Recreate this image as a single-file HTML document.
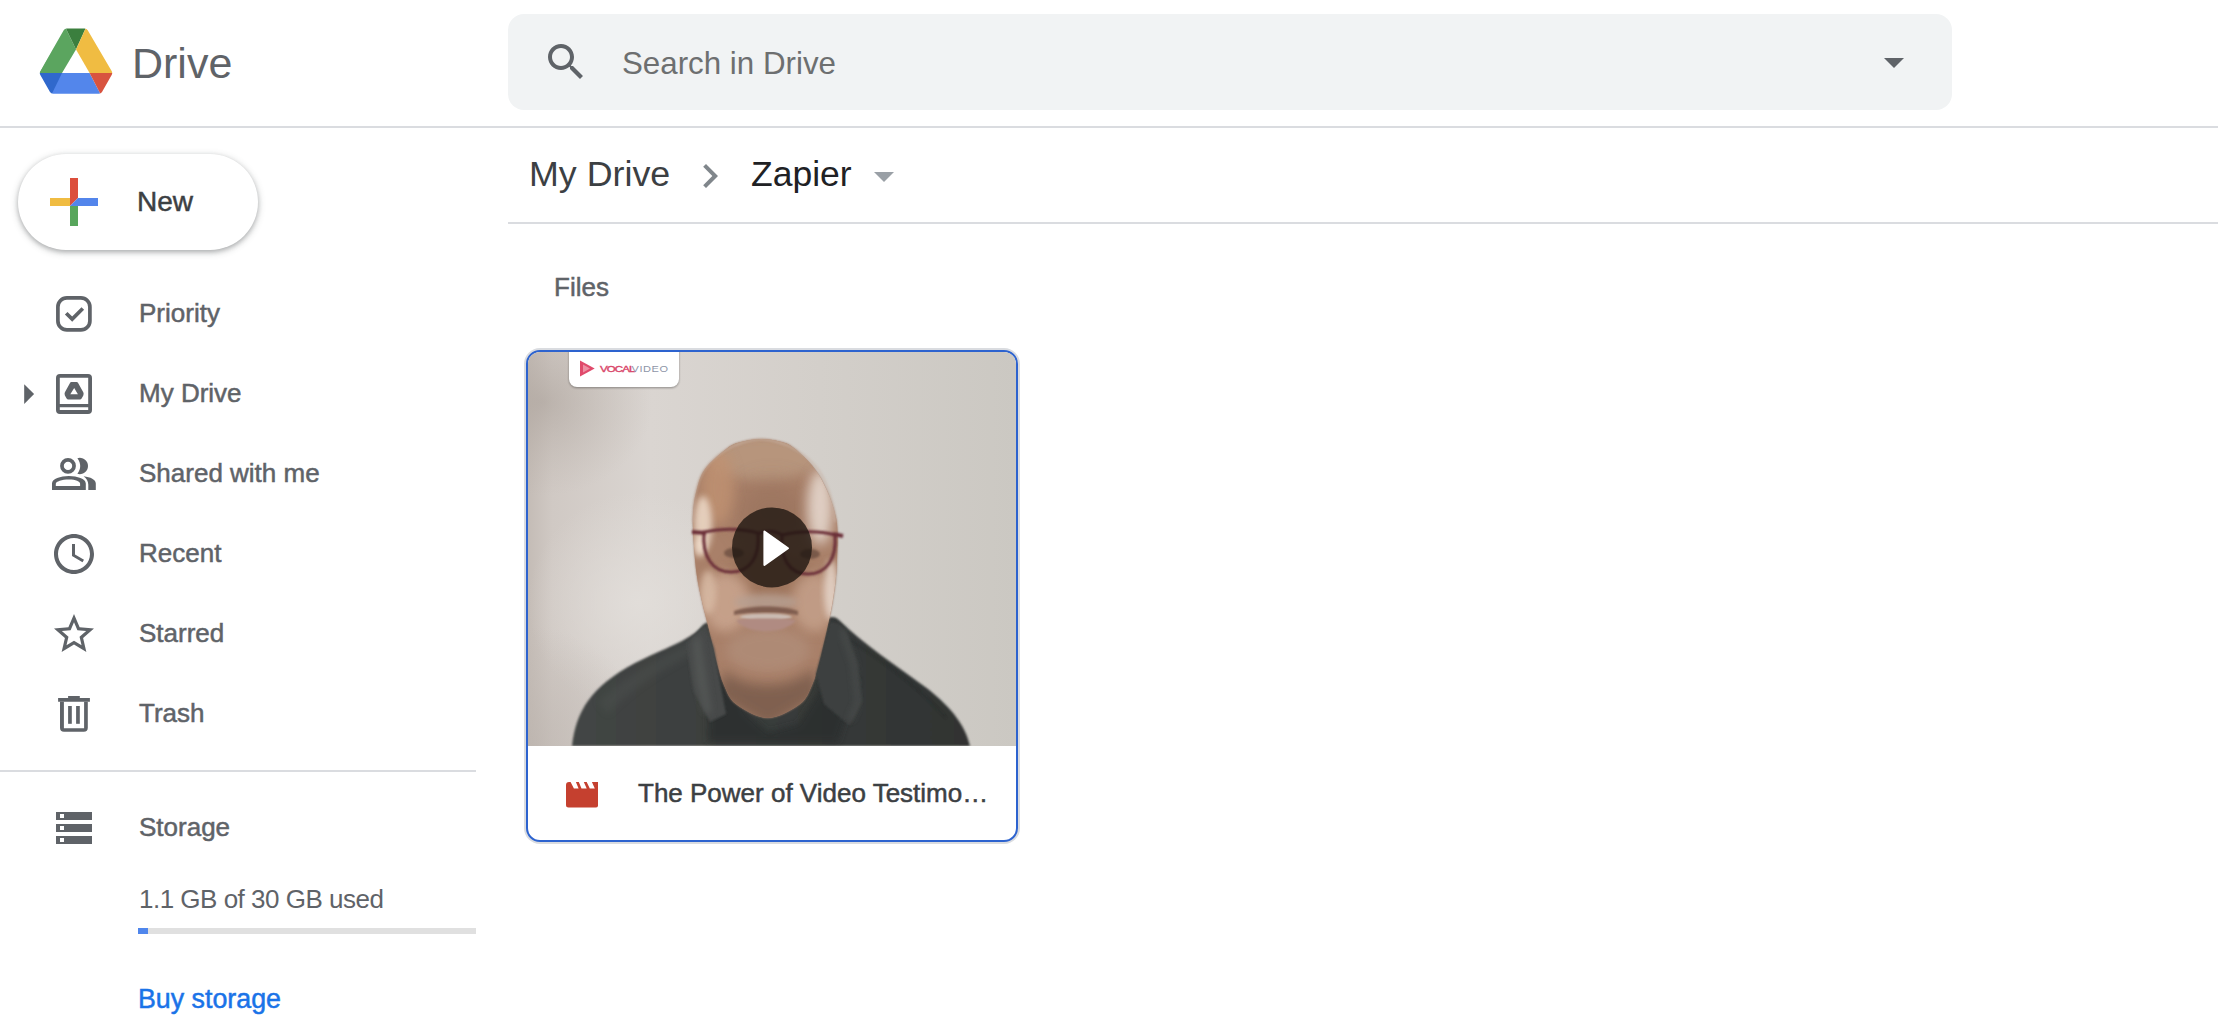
<!DOCTYPE html>
<html><head><meta charset="utf-8">
<style>
html,body{margin:0;padding:0;background:#fff;}
body{width:2218px;height:1034px;position:relative;overflow:hidden;font-family:"Liberation Sans",sans-serif;}
.a{position:absolute;white-space:nowrap;}
.med{-webkit-text-stroke:0.5px currentColor;}
.hline{position:absolute;height:2px;background:#dadce0;}
.nav{position:absolute;left:139px;font-size:26px;color:#5f6368;line-height:30px;}
</style></head>
<body>
<!-- Header -->
<svg class="a" style="left:37px;top:26px" width="78" height="70" viewBox="37 26 78 70">
  <defs><mask id="lgm" maskUnits="userSpaceOnUse" x="30" y="20" width="90" height="80"><path d="M66.73 32 L84.7 32 L108.76 73.03 L98.96 90.3 L53.04 90.3 L43.23 73.01 Z" fill="#fff" stroke="#fff" stroke-width="7" stroke-linejoin="round"/></mask></defs>
  <g mask="url(#lgm)">
  <path d="M64.7 26 L39 73 L62 73 L76 49.5 Z" fill="#5ba55f"/>
  <path d="M64.7 26 L86.7 26 L76 49.5 Z" fill="#3b7f3e"/>
  <path d="M86.7 26 L114 73 L89.6 73 L76 49.5 Z" fill="#f0bc42"/>
  <path d="M39 73 L62 73 L89.6 73 L101 95 L51.3 95 Z" fill="#5386eb"/>
  <path d="M38 73 L62 73 L51.3 95 L38 95 Z" fill="#3068cc"/>
  <path d="M89.6 73 L114 73 L114 95 L101 95 Z" fill="#d8533f"/>
  </g>
</svg>
<div class="a" style="left:132px;top:38px;font-size:43px;line-height:50px;color:#5f6368">Drive</div>

<div class="a" style="left:508px;top:14px;width:1444px;height:96px;border-radius:16px;background:#f1f3f4"></div>
<svg class="a" style="left:542px;top:38px" width="48" height="48" viewBox="0 0 24 24"><path fill="#5f6368" d="M15.5 14h-.79l-.28-.27C15.41 12.59 16 11.11 16 9.5 16 5.91 13.09 3 9.5 3S3 5.91 3 9.5 5.91 16 9.5 16c1.61 0 3.09-.59 4.23-1.57l.27.28v.79l5 4.99L20.49 19l-4.99-5zm-6 0C7.01 14 5 11.99 5 9.5S7.01 5 9.5 5 14 7.01 14 9.5 11.99 14 9.5 14z"/></svg>
<div class="a" style="left:622px;top:46px;font-size:31.3px;line-height:36px;color:#6d6f70">Search in Drive</div>
<svg class="a" style="left:1884px;top:58px" width="20" height="10" viewBox="0 0 20 10"><path d="M0 0 L20 0 L10 10 Z" fill="#5f6368"/></svg>

<div class="hline" style="left:0;top:126px;width:2218px"></div>

<!-- Sidebar -->
<div class="a" style="left:18px;top:154px;width:240px;height:96px;border-radius:48px;background:#fff;box-shadow:0 2px 4px rgba(60,64,67,.3),0 2px 6px 2px rgba(60,64,67,.15)"></div>
<svg class="a" style="left:50px;top:178px" width="48" height="48" viewBox="0 0 48 48">
  <rect x="0" y="20" width="20" height="8" fill="#f0bc42"/>
  <rect x="20" y="28" width="8" height="20" fill="#58a65c"/>
  <path d="M20 0 H28 V20 L20 28 Z" fill="#dc4e3c"/>
  <path d="M28 20 H48 V28 H20 Z" fill="#5385eb"/>
</svg>
<div class="a med" style="left:137px;top:186px;font-size:28px;line-height:32px;color:#3c4043">New</div>


<svg class="a" style="left:0;top:280px" width="120" height="580" viewBox="0 280 120 580">
 <g fill="#5f6368">
  <!-- priority -->
  <rect x="57.9" y="297.9" width="32" height="32" rx="9" fill="none" stroke="#5f6368" stroke-width="3.7"/>
  <path d="M66.2 313.2 L72.2 319.1 L82.8 308.5" fill="none" stroke="#5f6368" stroke-width="3.7"/>
  <!-- my drive arrow -->
  <path d="M24.2 384.2 L34.1 394 L24.2 403.9 Z"/>
  <!-- my drive icon -->
  <path fill-rule="evenodd" d="M60 374 H88 Q92 374 92 378 V410 Q92 414 88 414 H60 Q56 414 56 410 V378 Q56 374 60 374 Z M59.8 377.8 V404.1 H88.2 V377.8 Z M59.8 407.2 V410.1 H88.2 V407.2 Z"/>
  <path fill-rule="evenodd" d="M71.3 382 H76.6 Q77.6 382 78.1 382.9 L83.3 392.3 Q84 393.9 83.3 395.4 L81.6 398.6 Q81 399.6 80 399.6 H68.2 Q67.2 399.6 66.6 398.6 L64.9 395.4 Q64.2 393.9 64.9 392.3 L70 382.9 Q70.4 382 71.3 382 Z M74.2 387.9 L70.3 394.2 H77.9 Z"/>
  <!-- shared -->
  <circle cx="68" cy="465.9" r="6.05" fill="none" stroke="#5f6368" stroke-width="3.7"/>
  <path d="M77.4 458.2 A8.17 8.17 0 1 1 77.4 473.8 C79.4 471 80.2 468.5 80.2 466 C80.2 463.5 79.4 461 77.4 458.2 Z"/>
  <path fill-rule="evenodd" d="M52 490 V483.5 C52 478.8 60.5 476 68.9 476 C77.3 476 85.8 478.8 85.8 483.5 V490 Z M55.8 486 V483.8 C55.8 481.6 62 479.6 68.9 479.6 C75.8 479.6 80.1 481.6 80.1 483.8 V486 Z"/>
  <path d="M83.6 476.2 C90.5 477 95.8 479.5 95.8 483.5 V490 H88.3 V484.8 C88.3 481.2 86.5 478.2 83.6 476.2 Z"/>
  <!-- recent -->
  <g transform="translate(50 530) scale(2)"><path d="M11.99 2C6.47 2 2 6.48 2 12s4.47 10 9.99 10C17.52 22 22 17.52 22 12S17.52 2 11.99 2zM12 20c-4.42 0-8-3.58-8-8s3.58-8 8-8 8 3.58 8 8-3.58 8-8 8zm.5-13H11v6l5.25 3.15.75-1.23-4.5-2.67z"/></g>
  <!-- starred -->
  <g transform="translate(50 610) scale(2)"><path d="M22 9.24l-7.19-.62L12 2 9.19 8.63 2 9.24l5.46 4.73L5.82 21 12 17.27 18.18 21l-1.63-7.03L22 9.24zM12 15.4l-3.76 2.27 1-4.28-3.32-2.88 4.38-.38L12 6.1l1.71 4.04 4.38.38-3.32 2.88 1 4.28L12 15.4z"/></g>
  <!-- trash -->
  <path d="M68.1 696 H79.8 V698.1 H89.9 V701.8 H58.1 V698.1 H68.1 Z"/>
  <path fill-rule="evenodd" d="M60 701.8 H87.8 V727.8 Q87.8 731.8 83.8 731.8 H64 Q60 731.8 60 727.8 Z M63.9 701.8 V728.3 H84.1 V701.8 Z"/>
  <rect x="68.1" y="706" width="3.7" height="17.8"/>
  <rect x="76.1" y="706" width="3.7" height="17.8"/>
  <!-- storage -->
  <path fill-rule="evenodd" d="M56 812 H92 V820 H56 Z M60 814 V818 H64 V814 Z"/>
  <path fill-rule="evenodd" d="M56 824 H92 V832 H56 Z M60 826 V830 H64 V826 Z"/>
  <path fill-rule="evenodd" d="M56 836 H92 V844 H56 Z M60 838 V842 H64 V838 Z"/>
 </g>
</svg>
<div class="nav med" style="top:298px">Priority</div>
<div class="nav med" style="top:378px">My Drive</div>
<div class="nav med" style="top:458px">Shared with me</div>
<div class="nav med" style="top:538px">Recent</div>
<div class="nav med" style="top:618px">Starred</div>
<div class="nav med" style="top:698px">Trash</div>

<div class="hline" style="left:0;top:770px;width:476px"></div>
<div class="nav med" style="top:812px">Storage</div>
<div class="nav" style="top:884px;letter-spacing:-0.5px">1.1 GB of 30 GB used</div>
<div class="a" style="left:138px;top:928px;width:338px;height:6px;background:#e0e0e0"></div>
<div class="a" style="left:138px;top:928px;width:10px;height:6px;background:#4f86ec"></div>
<div class="nav med" style="top:984px;left:138px;font-size:26.8px;color:#1a73e8">Buy storage</div>

<!-- Main -->
<div class="a" style="left:529px;top:154px;font-size:35.8px;line-height:40px;color:#3c4043">My Drive</div>
<svg class="a" style="left:686px;top:152px" width="48" height="48" viewBox="0 0 24 24"><path fill="#80868b" d="M10 6L8.59 7.41 13.17 12l-4.58 4.59L10 18l6-6z"/></svg>
<div class="a" style="left:751px;top:154px;font-size:35.5px;line-height:40px;color:#202124">Zapier</div>
<svg class="a" style="left:874px;top:172px" width="20" height="10" viewBox="0 0 20 10"><path d="M0 0 L20 0 L10 10 Z" fill="#9aa0a6"/></svg>
<div class="hline" style="left:508px;top:222px;width:1710px"></div>

<div class="a med" style="left:554px;top:272px;font-size:26px;line-height:30px;color:#5f6368">Files</div>

<!-- Card -->
<div class="a" style="left:526px;top:350px;width:488px;height:488px;border:2px solid #2d63cf;border-radius:14px;box-shadow:0 0 0 2px #dadce0;overflow:hidden;background:#fff">
  <svg class="a" style="left:0;top:0" width="488" height="394" viewBox="0 0 488 394">
 <defs>
  <filter id="b1" x="-20%" y="-20%" width="140%" height="140%"><feGaussianBlur stdDeviation="1.2"/></filter>
  <filter id="b2" x="-30%" y="-30%" width="160%" height="160%"><feGaussianBlur stdDeviation="3"/></filter>
  <filter id="b3" x="-50%" y="-50%" width="200%" height="200%"><feGaussianBlur stdDeviation="6"/></filter>
  <filter id="b5" x="-80%" y="-80%" width="260%" height="260%"><feGaussianBlur stdDeviation="12"/></filter>
  <linearGradient id="bgL" x1="0" y1="0" x2="1" y2="0">
   <stop offset="0" stop-color="#c4bcb6"/><stop offset="0.05" stop-color="#d0c9c4"/><stop offset="0.25" stop-color="#dad5d1"/><stop offset="0.6" stop-color="#d3cfca"/><stop offset="1" stop-color="#cbc8c2"/>
  </linearGradient>
  <radialGradient id="tl" gradientUnits="userSpaceOnUse" cx="15" cy="50" r="110" gradientTransform="translate(15 50) scale(1 0.85) translate(-15 -50)">
   <stop offset="0" stop-color="#a0968e" stop-opacity="0.45"/><stop offset="0.55" stop-color="#a99f97" stop-opacity="0.2"/><stop offset="1" stop-color="#b0a69e" stop-opacity="0"/>
  </radialGradient>
  <radialGradient id="lt" gradientUnits="userSpaceOnUse" cx="110" cy="250" r="110">
   <stop offset="0" stop-color="#e2deda" stop-opacity="0.9"/><stop offset="1" stop-color="#e2deda" stop-opacity="0"/>
  </radialGradient>
  <radialGradient id="bl" gradientUnits="userSpaceOnUse" cx="0" cy="394" r="120">
   <stop offset="0" stop-color="#b9b1ab" stop-opacity="0.6"/><stop offset="1" stop-color="#b9b1ab" stop-opacity="0"/>
  </radialGradient>
  <radialGradient id="skull" cx="0.5" cy="0.2" r="0.75">
   <stop offset="0" stop-color="#b08a74"/><stop offset="0.45" stop-color="#a27b66"/><stop offset="1" stop-color="#86665a"/>
  </radialGradient>
  <linearGradient id="shirtG" x1="0" y1="0" x2="1" y2="0">
   <stop offset="0" stop-color="#434645"/><stop offset="0.5" stop-color="#393c3b"/><stop offset="1" stop-color="#303332"/>
  </linearGradient>
  <clipPath id="hc"><path d="M233.0 87.0 C239.1 87.0 246.1 88.1 251.6 89.6 C257.1 91.1 260.1 91.6 265.8 96.0 C271.6 100.4 280.7 109.2 286.1 116.0 C291.5 122.8 294.9 129.8 298.3 137.0 C301.7 144.2 304.5 152.2 306.4 159.3 C308.3 166.4 309.2 169.4 309.5 179.6 C309.8 189.8 309.2 208.3 308.4 220.2 C307.5 232.0 305.8 242.2 304.4 250.7 C303.0 259.2 301.7 264.4 300.3 271.0 C298.9 277.6 297.6 283.3 296.0 290.0 C294.4 296.7 293.0 303.8 291.0 311.0 C289.0 318.2 287.2 326.2 284.0 333.0 C280.8 339.8 279.3 346.5 272.0 352.0 C264.7 357.5 250.7 366.0 240.0 366.0 C229.3 366.0 215.3 357.5 208.0 352.0 C200.7 346.5 199.2 339.8 196.0 333.0 C192.8 326.2 191.0 318.2 189.0 311.0 C187.0 303.8 185.6 296.7 184.0 290.0 C182.4 283.3 181.0 277.6 179.4 271.0 C177.8 264.4 176.2 259.2 174.3 250.7 C172.5 242.2 169.8 232.0 168.3 220.2 C166.8 208.3 165.7 189.8 165.2 179.6 C164.7 169.4 164.7 166.1 165.2 159.3 C165.7 152.5 166.3 146.1 168.3 139.0 C170.3 131.9 171.8 124.2 177.0 117.0 C182.2 109.8 193.4 100.6 199.7 96.0 C206.0 91.4 209.4 91.1 215.0 89.6 C220.6 88.1 226.9 87.0 233.0 87.0 Z"/></clipPath>
 </defs>
 <rect width="488" height="394" fill="url(#bgL)"/>
 <rect width="488" height="394" fill="url(#tl)"/>
 <rect width="488" height="394" fill="url(#lt)"/>
 <rect width="488" height="394" fill="url(#bl)"/>
 <!-- shirt -->
 <path d="M44 394 C48 360 62 335 107 311 C135 297 162 288 172 276 C175 272 178 270 182 270 L244 290 L300 266 C304 264 308 265 311 268 C335 292 370 315 400 337 C425 357 438 375 442 394 Z" fill="url(#shirtG)" filter="url(#b1)"/>
 <path d="M70 350 C95 325 130 305 168 288 L172 298 C140 315 105 335 80 362 Z" fill="#4c4f4e" opacity="0.5" filter="url(#b2)"/>
 <path d="M322 288 C360 312 392 336 418 366" stroke="#282b2a" stroke-width="1.5" fill="none" opacity="0.6" filter="url(#b1)"/>
 <!-- collar shadows -->
 <path d="M178 280 L200 300 L218 360 L240 380 L270 372 L290 340 L300 290 L306 272 L330 330 L310 390 L180 390 Z" fill="#2b2e2d" opacity="0.8" filter="url(#b2)"/>
 <!-- head + neck -->
 <path d="M233.0 87.0 C239.1 87.0 246.1 88.1 251.6 89.6 C257.1 91.1 260.1 91.6 265.8 96.0 C271.6 100.4 280.7 109.2 286.1 116.0 C291.5 122.8 294.9 129.8 298.3 137.0 C301.7 144.2 304.5 152.2 306.4 159.3 C308.3 166.4 309.2 169.4 309.5 179.6 C309.8 189.8 309.2 208.3 308.4 220.2 C307.5 232.0 305.8 242.2 304.4 250.7 C303.0 259.2 301.7 264.4 300.3 271.0 C298.9 277.6 297.6 283.3 296.0 290.0 C294.4 296.7 293.0 303.8 291.0 311.0 C289.0 318.2 287.2 326.2 284.0 333.0 C280.8 339.8 279.3 346.5 272.0 352.0 C264.7 357.5 250.7 366.0 240.0 366.0 C229.3 366.0 215.3 357.5 208.0 352.0 C200.7 346.5 199.2 339.8 196.0 333.0 C192.8 326.2 191.0 318.2 189.0 311.0 C187.0 303.8 185.6 296.7 184.0 290.0 C182.4 283.3 181.0 277.6 179.4 271.0 C177.8 264.4 176.2 259.2 174.3 250.7 C172.5 242.2 169.8 232.0 168.3 220.2 C166.8 208.3 165.7 189.8 165.2 179.6 C164.7 169.4 164.7 166.1 165.2 159.3 C165.7 152.5 166.3 146.1 168.3 139.0 C170.3 131.9 171.8 124.2 177.0 117.0 C182.2 109.8 193.4 100.6 199.7 96.0 C206.0 91.4 209.4 91.1 215.0 89.6 C220.6 88.1 226.9 87.0 233.0 87.0 Z" fill="#a07c68" filter="url(#b1)"/>
 <g clip-path="url(#hc)">
  <rect x="150" y="80" width="180" height="300" fill="#a98069"/>
  <ellipse cx="236" cy="105" rx="55" ry="24" fill="#b8977f" opacity="0.9" filter="url(#b3)"/>
  <ellipse cx="244" cy="160" rx="36" ry="30" fill="#8f6a56" opacity="0.45" filter="url(#b5)"/>
  <ellipse cx="190" cy="135" rx="16" ry="38" fill="#c09272" opacity="0.8" filter="url(#b3)"/>
  <ellipse cx="242" cy="222" rx="45" ry="24" fill="#9a7158" opacity="0.6" filter="url(#b3)"/>
  <ellipse cx="198" cy="250" rx="24" ry="30" fill="#caa690" opacity="0.85" filter="url(#b3)"/>
  <ellipse cx="286" cy="250" rx="22" ry="30" fill="#c6a28c" opacity="0.8" filter="url(#b3)"/>
  <ellipse cx="240" cy="298" rx="42" ry="22" fill="#b08d79" opacity="0.8" filter="url(#b3)"/>
  <path d="M196 318 C215 338 265 338 286 316 L290 345 L240 375 L190 345 Z" fill="#7c5d4d" opacity="0.9" filter="url(#b3)"/>
  <ellipse cx="292" cy="155" rx="13" ry="38" fill="#e8dcd3" opacity="0.85" filter="url(#b3)"/>
  <ellipse cx="303" cy="238" rx="7" ry="30" fill="#e6d6ca" opacity="0.85" filter="url(#b2)"/>
  <ellipse cx="175" cy="172" rx="9" ry="28" fill="#ead6c4" opacity="0.9" filter="url(#b2)"/>
  <ellipse cx="172" cy="195" rx="6" ry="10" fill="#efdccb" opacity="0.9" filter="url(#b2)"/>
  <ellipse cx="180" cy="240" rx="8" ry="22" fill="#d9bca6" opacity="0.8" filter="url(#b2)"/>
 </g>
 <path d="M165 170 C165 150 168 130 177 117 C185 105 205 89 233 87 C261 89 281 105 290 117 C299 130 306 150 307 170" fill="none" stroke="#c8b2a4" stroke-width="2" opacity="0.6" filter="url(#b1)"/>
 <!-- collars over neck edges -->
 <path d="M158 292 C166 284 172 276 178 274 L186 296 L192 330 L198 362 L182 370 L166 340 Z" fill="#464948" filter="url(#b1)"/>
 <path d="M164 290 L172 282 L178 320 L184 362 L176 360 L168 330 Z" fill="#555857" opacity="0.8" filter="url(#b2)"/>
 <path d="M302 270 C308 270 314 272 318 278 L330 312 L334 350 L322 374 L296 352 L288 322 Z" fill="#3c403f" filter="url(#b1)"/>
 <path d="M314 278 L326 312 L330 350 L322 368" stroke="#4d5150" stroke-width="4" fill="none" opacity="0.8" filter="url(#b2)"/>
 <!-- mustache/mouth -->
 <ellipse cx="238" cy="250" rx="32" ry="8" fill="#b7a093" opacity="0.8" filter="url(#b2)"/>
 <path d="M206 259 C222 253 254 253 270 259 L270 263 C254 260 222 260 206 263 Z" fill="#7a594c" opacity="0.9" filter="url(#b1)"/>
 <ellipse cx="238" cy="265" rx="26" ry="3.5" fill="#cbbcb3" filter="url(#b1)"/>
 <path d="M208 268 C222 266 254 266 268 268 C258 283 218 283 208 268 Z" fill="#b08b82" filter="url(#b1)"/>
 <!-- eyes -->
 <ellipse cx="206" cy="201" rx="10" ry="5" fill="#5a4034" opacity="0.6" filter="url(#b1)"/>
 <ellipse cx="282" cy="202" rx="10" ry="5" fill="#5a4034" opacity="0.6" filter="url(#b1)"/>
 <!-- glasses -->
 <g fill="none" stroke="#6b2f38" stroke-width="3" filter="url(#b1)">
  <path d="M164 180 L178 181" stroke-width="4"/>
  <path d="M176 180 C195 176 215 177 230 181 C232 205 222 220 203 220 C184 220 174 204 176 180 Z"/>
  <path d="M254 183 C272 179 292 179 307 183 C309 207 298 222 280 222 C261 222 252 206 254 183 Z"/>
  <path d="M229 182 C238 178 246 178 254 183"/>
  <path d="M305 182 L315 184" stroke-width="4"/>
 </g>
 <!-- play button -->
 <circle cx="244" cy="195.4" r="40" fill="#1c1410" opacity="0.78"/>
 <path d="M236.4 179.5 L260 196.2 L236.4 213 Z" fill="#fff" stroke="#fff" stroke-width="2" stroke-linejoin="round"/>
 <!-- badge -->
 <rect x="41" y="-9" width="110" height="45" rx="8" fill="#000" opacity="0.35" filter="url(#b1)"/>
 <rect x="41" y="-10" width="110" height="45" rx="8" fill="#fff"/>
 <path d="M52 8.6 L66.7 16.5 L52 24.4 Z" fill="#e04a6b"/>
 <path d="M55 12.5 L62 16.5 L55 20.5 Z" fill="#ee8fa3"/>
 <text x="72" y="20" font-family="Liberation Sans" font-size="11.5" fill="#d9466a" stroke="#d9466a" stroke-width="0.5" letter-spacing="-0.9" transform="translate(72 0) scale(1 0.8) translate(-72 5)">VOCAL</text>
 <text x="103.5" y="20" font-family="Liberation Sans" font-size="11" fill="#8e95a8" letter-spacing="0.6" transform="scale(1 0.8) translate(0 5)">VIDEO</text>
</svg>
</div>
<svg class="a" style="left:566px;top:782px" width="32" height="26" viewBox="0 0 32 26"><path fill="#c5402f" d="M0 3 Q0 0 3 0 H4.6 L7.9 6.5 H12.6 L9.9 0 H12.8 L15.5 6.5 H20.7 L17.8 0 H20.7 L23.8 6.5 H28.8 L25.9 0 H32.1 V23 Q32.1 25.5 29.6 25.5 H2.5 Q0 25.5 0 23 Z"/></svg>
<div class="a med" style="left:638px;top:778px;font-size:26px;line-height:30px;color:#3c4043">The Power of Video Testimo…</div>

</body></html>
